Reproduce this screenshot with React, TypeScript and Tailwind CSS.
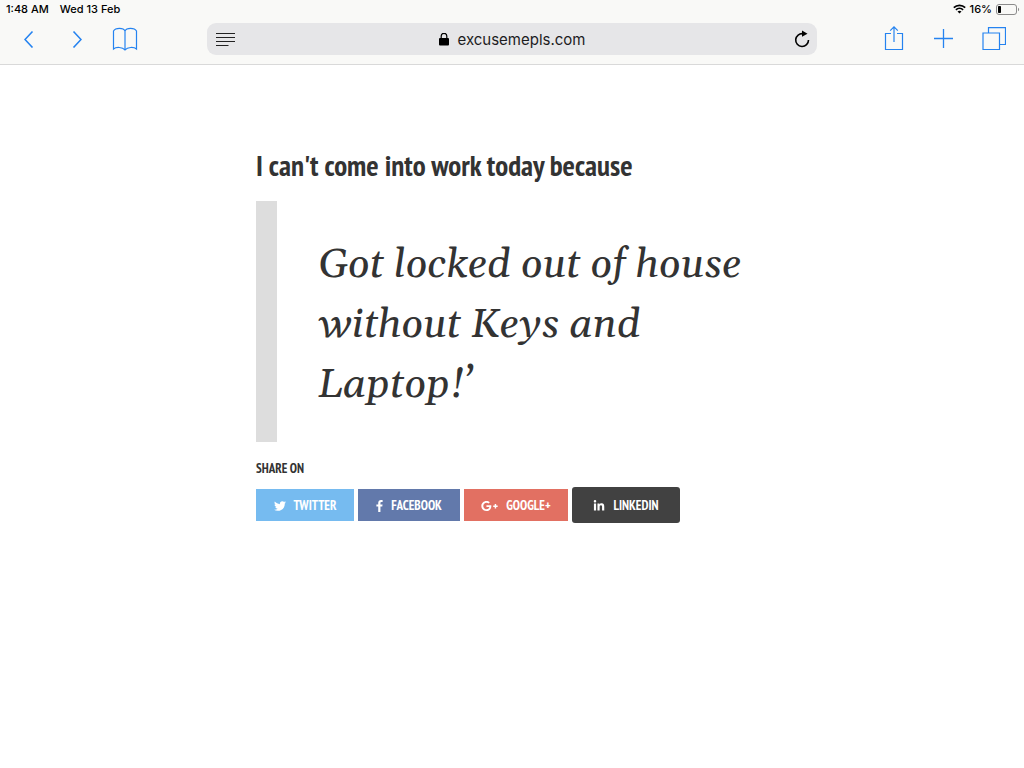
import React from "react";
import { FaTwitter, FaGooglePlusG, FaLinkedinIn } from "react-icons/fa";

const condensed = "font-['PT_Sans_Narrow','Liberation_Sans_Narrow','Liberation_Sans',sans-serif]";

function ToolButton({ label, children }: { label: string; children: React.ReactNode }) {
  return (
    <button type="button" aria-label={label} className="flex h-7 w-7 items-center justify-center text-[#2583f0]">
      {children}
    </button>
  );
}

function StatusBar() {
  return (
    <div className="flex h-[18px] items-center justify-between pl-1.5 pr-1 text-[11px] font-medium text-black">
      <div className="flex gap-[11px]">
        <span>1:48 AM</span>
        <span>Wed 13 Feb</span>
      </div>
      <div className="flex items-center gap-1">
        <svg width="13" height="10" viewBox="0 0 13 10" fill="none" stroke="currentColor" strokeWidth="1.7" aria-hidden="true">
          <path d="M.8 3.6a8.2 8.2 0 0 1 11.4 0M2.9 5.8a5.2 5.2 0 0 1 7.2 0" />
          <path d="M6.5 9.6 4.5 7.6a2.9 2.9 0 0 1 4 0Z" fill="currentColor" stroke="none" />
        </svg>
        <span>16%</span>
        <svg width="24" height="11" viewBox="0 0 24 11" fill="none" aria-hidden="true">
          <rect x=".5" y=".5" width="20" height="10" rx="2.5" stroke="#8b8b8b" />
          <rect x="2" y="2" width="3" height="7" rx=".8" fill="#000" />
          <path d="M22 3.8c1.5.4 1.5 3 0 3.4Z" fill="#8b8b8b" />
        </svg>
      </div>
    </div>
  );
}

function Toolbar() {
  return (
    <div className="flex h-[46px] items-center pb-1 pl-[15px] pr-4">
      <div className="flex w-48 shrink-0 items-center gap-5">
        <ToolButton label="Back">
          <svg width="10" height="18" viewBox="0 0 10 18" fill="none" stroke="currentColor" strokeWidth="1.6">
            <path d="M8.500 1.500 1 9.500l7.500 8" />
          </svg>
        </ToolButton>
        <ToolButton label="Forward">
          <svg width="10" height="18" viewBox="0 0 10 18" fill="none" stroke="currentColor" strokeWidth="1.6">
            <path d="m1.500 1.500 7.500 8-7.500 8" />
          </svg>
        </ToolButton>
        <ToolButton label="Bookmarks">
          <svg width="26" height="24" viewBox="0 0 26 24" fill="none" stroke="currentColor" strokeWidth="1.2">
            <path d="M13 4C11.5 .4 3.5 .4 1.500 4V22C4 19.800 10.500 19.800 13 23C15.500 19.800 22 19.800 24.500 22V4C22.500 .4 14.500 .4 13 4V23" />
          </svg>
        </ToolButton>
      </div>
      <div className="flex h-8 min-w-0 flex-1 items-center justify-between rounded-[9px] bg-[#e6e6e8] pl-2 pr-[3px] text-black">
        <button type="button" aria-label="Reader view" className="flex h-6 w-5 items-center justify-center">
          <svg width="19" height="13" viewBox="0 0 19 13" stroke="#222" strokeWidth="1.1">
            <path d="M0 .5h19M0 4.500h19M0 8.500h19M0 12.500h12.500" />
          </svg>
        </button>
        <a href="#address" className="flex items-center gap-2 pt-0.5 text-[15px] text-[#1c1c1e]">
          <svg width="10" height="15" viewBox="0 0 10 15" fill="none" aria-hidden="true">
            <path d="M2.200 5.500V3.100a2.800 2.800 0 0 1 5.600 0V5.500" stroke="#000" strokeWidth="1.200" />
            <rect y="5" width="10" height="7.500" rx="1" fill="#000" />
          </svg>
          excusemepls.com
        </a>
        <button type="button" aria-label="Reload" className="flex h-6 w-6 items-center justify-center">
          <svg width="16" height="18" viewBox="0 0 16 18" fill="none">
            <path d="M9 3.700A6.400 6.400 0 1 0 14.500 10" stroke="#000" strokeWidth="1.600" />
            <path d="M8 .6 13.500 3.800 8 6.800Z" fill="#000" />
          </svg>
        </button>
      </div>
      <div className="flex w-[191px] shrink-0 items-center justify-end gap-[22px]">
        <ToolButton label="Share">
          <svg width="20" height="26" viewBox="0 0 20 26" fill="none" stroke="currentColor" strokeWidth="1.200">
            <path d="M7 7.500H1.500V23.500H18.500V7.500H13M10 16V1M6.200 4.700 10 .9l3.800 3.800" />
          </svg>
        </ToolButton>
        <ToolButton label="New tab">
          <svg width="20" height="20" viewBox="0 0 20 20" stroke="currentColor" strokeWidth="1.300">
            <path d="M9.500 0v19M0 9.500h19" />
          </svg>
        </ToolButton>
        <ToolButton label="Tabs">
          <svg width="24" height="24" viewBox="0 0 24 24" fill="none" stroke="currentColor" strokeWidth="1.200">
            <path d="M1 6h16.500v16.500H1ZM6.500 6V.6h17v16.900h-6" />
          </svg>
        </ToolButton>
      </div>
    </div>
  );
}

function FacebookMark({ className }: { className?: string }) {
  return (
    <svg viewBox="479 0 864 1664" fill="currentColor" className={className} aria-hidden="true">
      <path d="M1343 12v264h-157q-86 0-116 36t-30 108v189h293l-39 296h-254v759h-306v-759h-255v-296h255v-218q0-186 104-288.5t277-102.5q147 0 228 12z" />
    </svg>
  );
}

const networks = [
  { name: "Twitter", Icon: FaTwitter, iconSize: "h-3 w-3", look: "h-8 min-w-[98px] bg-[#76bbf0]" },
  { name: "Facebook", Icon: FacebookMark, iconSize: "h-3 w-[7px]", look: "h-8 min-w-[102px] bg-[#6279ab]" },
  { name: "Google+", Icon: FaGooglePlusG, iconSize: "h-[14px] w-[17px]", look: "h-8 min-w-[104px] bg-[#e27062]" },
  { name: "LinkedIn", Icon: FaLinkedinIn, iconSize: "h-3 w-3", look: "h-9 min-w-[108px] rounded-[3px] bg-[#414141]" },
];

export default function App() {
  return (
    <div className="min-h-screen bg-white">
      <header className="border-b border-[#d9d9d9] bg-[#f9f9f7] font-['Inter','Liberation_Sans',sans-serif]">
        <StatusBar />
        <Toolbar />
      </header>
      <main className="mx-auto w-1/2 pt-[81px] text-[#333333]">
        <h1 className={`${condensed} whitespace-nowrap text-[29px] font-bold leading-[38px]`}>
          I can't come into work today because
        </h1>
        <blockquote className="mt-[17px] border-l-[21px] border-[#dddddd] pb-[27px] pl-[41px] pt-[34px] font-['Georgia','Gelasio','Liberation_Serif',serif] text-[41px] italic leading-[60px]">
          Got locked out of house without Keys and Laptop!’
        </blockquote>
        <section className={condensed}>
          <h2 className="mt-[18px] text-[13px] font-bold uppercase leading-[18px]">Share on</h2>
          <nav aria-label="Share" className="mt-[9px] flex items-center gap-1">
            {networks.map(({ name, Icon, iconSize, look }) => (
              <a
                key={name}
                href={`#${name.toLowerCase()}`}
                className={`${look} flex items-center justify-center gap-2 pt-0.5 text-[13px] font-bold uppercase text-white`}
              >
                <Icon className={iconSize} aria-hidden="true" />
                {name}
              </a>
            ))}
          </nav>
        </section>
      </main>
    </div>
  );
}
